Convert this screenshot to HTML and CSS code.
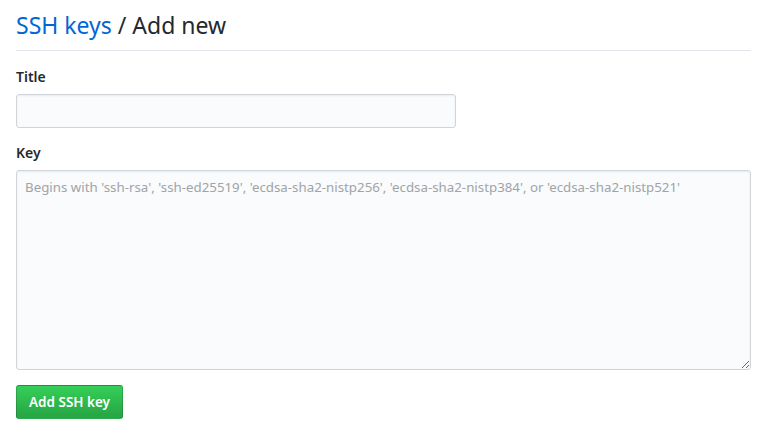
FILE: index.html
```html
<!DOCTYPE html>
<html>
<head>
<meta charset="utf-8">
<link rel="stylesheet" href="styles.css">
</head>
<body>
<div class="page">
  <h2 class="subhead"><a class="crumb" href="#">SSH keys</a> / Add new</h2>
  <form class="form">
    <div class="field">
      <label class="label">Title</label>
      <input class="input title-input" type="text">
    </div>
    <div class="field">
      <label class="label">Key</label>
      <textarea class="input key-input" placeholder="Begins with 'ssh-rsa', 'ssh-ed25519', 'ecdsa-sha2-nistp256', 'ecdsa-sha2-nistp384', or 'ecdsa-sha2-nistp521'"></textarea>
    </div>
    <button class="btn-primary" type="button">Add SSH key</button>
  </form>
</div>
</body>
</html>
```
FILE: styles.css
```css
html, body {
  margin: 0;
  padding: 0;
  background: #fff;
}
body {
  font-family: "Noto Sans", "Open Sans", sans-serif;
  color: #24292e;
  font-size: 14px;
}
.page {
  padding: 7px 10px 0 16px;
}
.subhead {
  margin: 0 0 16px 0;
  padding-bottom: 7px;
  border-bottom: 1px solid #e1e4e8;
  font-size: 23px;
  font-weight: 400;
  line-height: 36px;
}
.crumb {
  color: #0366d6;
  text-decoration: none;
}
.form {
  display: flex;
  flex-direction: column;
  align-items: flex-start;
}
.field {
  display: flex;
  flex-direction: column;
  align-items: stretch;
  width: 100%;
  margin-bottom: 15px;
}
.label {
  font-weight: 600;
  font-size: 14px;
  line-height: 20px;
  margin-bottom: 7px;
}
.input {
  box-sizing: border-box;
  background: #fafbfc;
  border: 1px solid #d1d5da;
  border-radius: 3px;
  box-shadow: inset 0 1px 2px rgba(27,31,35,0.075);
  font-family: inherit;
  font-size: 14px;
  padding: 6px 8px;
  color: #24292e;
}
.title-input {
  width: 440px;
  height: 34px;
}
.key-input {
  width: 100%;
  height: 200px;
  resize: vertical;
  font-size: 13.3px;
  line-height: 20px;
}
.key-input::placeholder {
  color: #a0a4a8;
}
.btn-primary {
  box-sizing: border-box;
  height: 34px;
  padding: 0 12px;
  border: 1px solid rgba(27,31,35,0.2);
  border-radius: 3px;
  background: linear-gradient(#34d058, #28a745 90%);
  color: #fff;
  font-family: inherit;
  font-size: 13.5px;
  font-weight: 600;
  cursor: pointer;
}
```
